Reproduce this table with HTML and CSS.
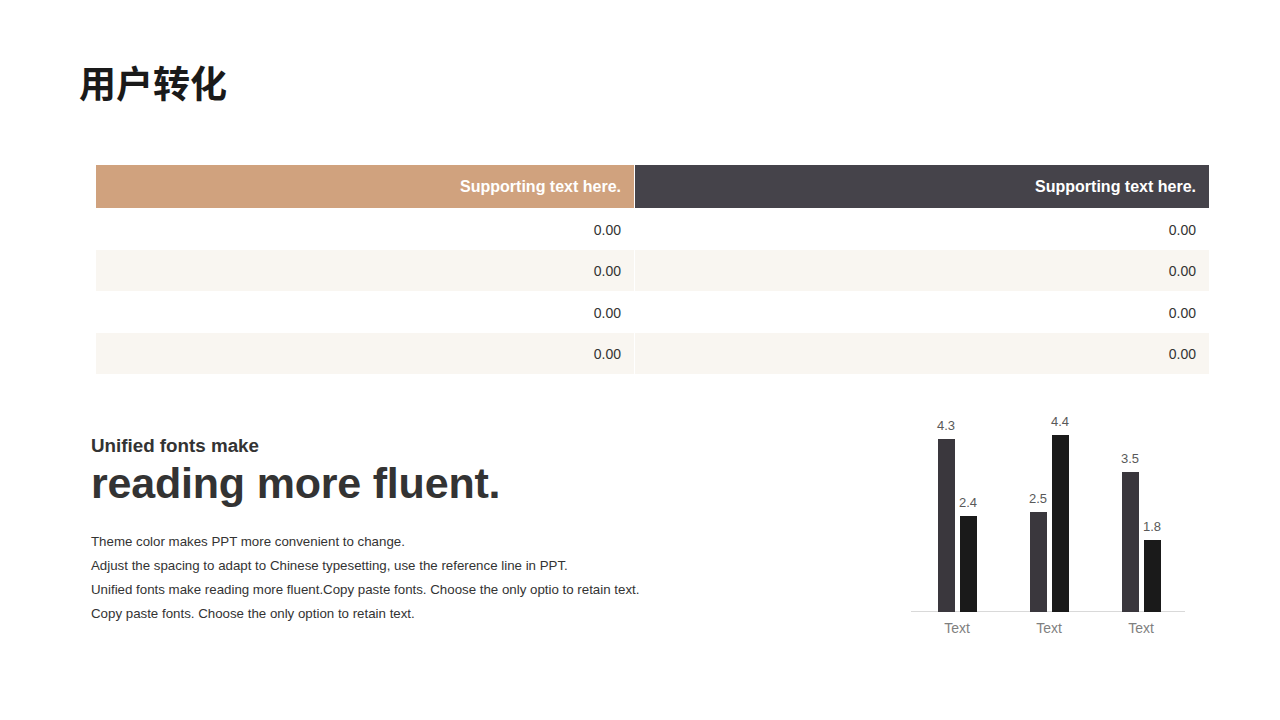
FILE: index.html
```html
<!DOCTYPE html>
<html lang="zh">
<head>
<meta charset="utf-8">
<link rel="stylesheet" href="styles.css">
</head>
<body>
<div class="slide">
  <h1 class="title">用户转化</h1>
  <div class="table">
    <div class="cell head tan">Supporting text here.</div>
    <div class="cell head dark">Supporting text here.</div>
    <div class="cell">0.00</div><div class="cell">0.00</div>
    <div class="cell alt">0.00</div><div class="cell alt">0.00</div>
    <div class="cell">0.00</div><div class="cell">0.00</div>
    <div class="cell alt">0.00</div><div class="cell alt">0.00</div>
  </div>
  <div class="bottom">
    <div class="text">
      <div class="sub">Unified fonts make</div>
      <div class="big">reading more fluent.</div>
      <div class="body">
        <p>Theme color makes PPT more convenient to change.</p>
        <p>Adjust the spacing to adapt to Chinese typesetting, use the reference line in PPT.</p>
        <p>Unified fonts make reading more fluent.Copy paste fonts. Choose the only optio to retain text.</p>
        <p>Copy paste fonts. Choose the only option to retain text.</p>
      </div>
    </div>
    <div class="chart">
      <div class="plot">
        <div class="group">
          <div class="bar-col"><span class="val">4.3</span><div class="bar b1" style="height:173px"></div></div>
          <div class="bar-col"><span class="val">2.4</span><div class="bar b2" style="height:96px"></div></div>
        </div>
        <div class="group">
          <div class="bar-col"><span class="val">2.5</span><div class="bar b1" style="height:100px"></div></div>
          <div class="bar-col"><span class="val">4.4</span><div class="bar b2" style="height:177px"></div></div>
        </div>
        <div class="group">
          <div class="bar-col"><span class="val">3.5</span><div class="bar b1" style="height:140px"></div></div>
          <div class="bar-col"><span class="val">1.8</span><div class="bar b2" style="height:72px"></div></div>
        </div>
      </div>
      <div class="axis">
        <span>Text</span><span>Text</span><span>Text</span>
      </div>
    </div>
  </div>
</div>
</body>
</html>
```
FILE: styles.css
```css
* { box-sizing: border-box; margin: 0; padding: 0; }
body { margin: 0; background: #fff; font-family: "Liberation Sans", Arial, sans-serif; }
.slide { width: 1280px; height: 720px; position: relative; overflow: hidden; background: #fff; }
.title {
  font-family: "Noto Sans CJK SC", sans-serif;
  font-weight: 700;
  font-size: 37px;
  line-height: 52px;
  color: #1a1a1a;
  margin: 56px 0 0 79px;
}
.table {
  margin: 57px 0 0 96px;
  width: 1113px;
  display: grid;
  grid-template-columns: 538px 574px;
  column-gap: 1px;
  background: #fff;
}
.cell {
  height: 41.5px;
  display: flex;
  align-items: center;
  justify-content: flex-end;
  padding-right: 13px;
  padding-top: 2px;
  font-size: 14px;
  color: #333;
}
.cell.alt { background: #f9f6f1; }
.cell.head {
  height: 43px;
  padding-top: 0;
  font-weight: 700;
  font-size: 16px;
  color: #fff;
}
.cell.tan { background: #d0a27e; }
.cell.dark { background: #45434a; }
.bottom {
  display: flex;
  justify-content: space-between;
  align-items: flex-start;
  margin-top: 40px;
}
.text { margin-left: 91px; padding-top: 21px; color: #333; }
.sub { font-size: 18.8px; font-weight: 700; line-height: 22px; }
.big { font-size: 43px; font-weight: 700; line-height: 52px; letter-spacing: -0.2px; }
.body { margin-top: 21px; font-size: 13.3px; line-height: 24px; color: #333; }
.chart { width: 274px; margin-right: 95px; }
.plot {
  height: 198px;
  display: grid;
  grid-template-columns: repeat(3, 92px);
  justify-items: center;
  align-items: end;
  border-bottom: 1px solid #d9d9d9;
}
.group { display: flex; gap: 5px; align-items: flex-end; }
.bar-col { display: flex; flex-direction: column; align-items: center; width: 17px; }
.val { font-size: 13px; color: #595959; line-height: 15px; margin-bottom: 6px; white-space: nowrap; }
.bar { width: 17px; }
.b1 { background: #3a373d; }
.b2 { background: #1a1a1a; }
.axis {
  display: grid;
  grid-template-columns: repeat(3, 92px);
  justify-items: center;
  font-size: 14px;
  color: #7f7f7f;
  margin-top: 8px;
}
```
